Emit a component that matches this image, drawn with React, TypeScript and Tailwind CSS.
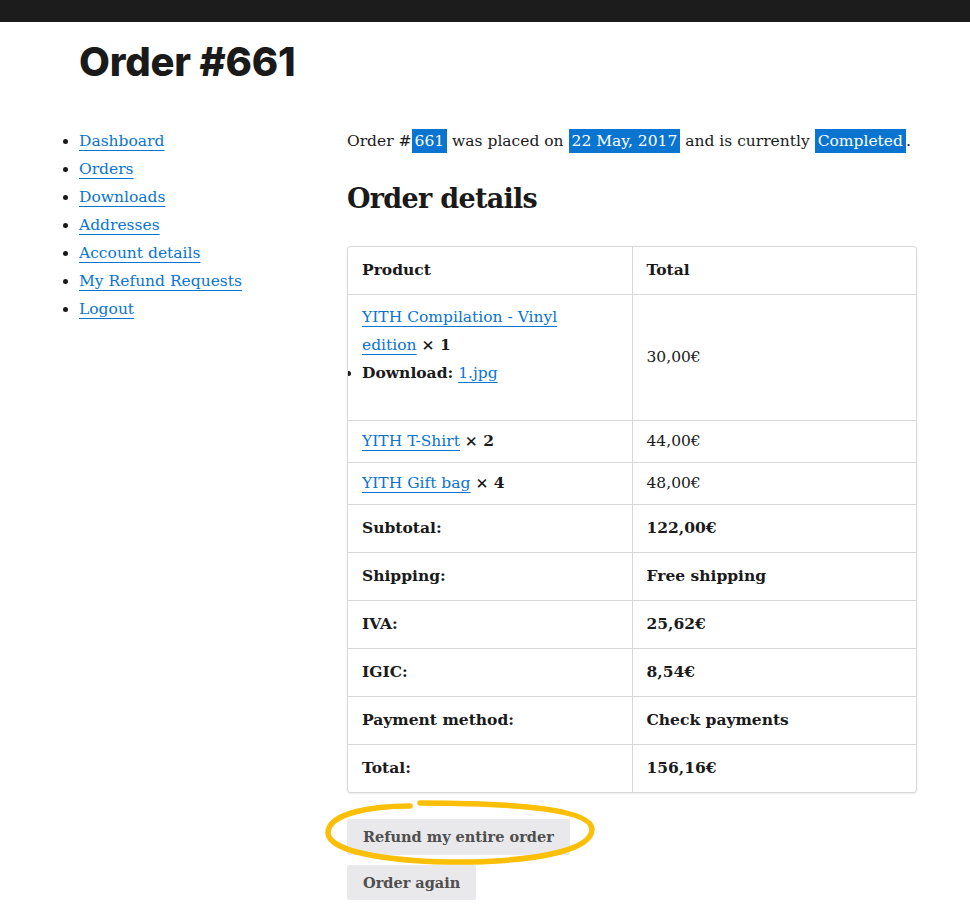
const serif = "font-['DejaVu_Serif','Liberation_Serif',serif]";

const navItems = [
  "Dashboard",
  "Orders",
  "Downloads",
  "Addresses",
  "Account details",
  "My Refund Requests",
  "Logout",
];

const linkCls =
  "text-[#0a74d1] underline decoration-1 underline-offset-[4px] [text-decoration-skip-ink:none]";

const totals = [
  { label: "Subtotal:", value: "122,00€" },
  { label: "Shipping:", value: "Free shipping" },
  { label: "IVA:", value: "25,62€" },
  { label: "IGIC:", value: "8,54€" },
  { label: "Payment method:", value: "Check payments" },
  { label: "Total:", value: "156,16€" },
];

function Mark({ children }: { children: React.ReactNode }) {
  return <mark className="bg-[#0a74d1] text-white px-[3px] py-[3px]">{children}</mark>;
}

export default function App() {
  return (
    <div className={`min-h-screen bg-white text-[#1a1a1a] ${serif} text-[15.5px] leading-[28px]`}>
      <div className="h-[22px] bg-[#1c1c1c]" />

      <div className="pl-[79px]">
        <h1 className="mt-[18px] font-['Inter','Noto_Sans',sans-serif] font-extrabold text-[40px] leading-[44px] tracking-[-0.2px] text-[#1a1a1a]">
          Order #661
        </h1>

        <div className="flex mt-[43px]">
          {/* account nav */}
          <nav className="w-[268px] shrink-0">
            <ul className="list-disc pl-0">
              {navItems.map((item) => (
                <li key={item}>
                  <a href="#" className={linkCls}>
                    {item}
                  </a>
                </li>
              ))}
            </ul>
          </nav>

          {/* order content */}
          <main className="w-[570px]">
            <p>
              Order #<Mark>661</Mark> was placed on <Mark>22 May, 2017</Mark> and is currently{" "}
              <Mark>Completed</Mark>.
            </p>

            <h2 className="mt-[26px] text-[27px] leading-[36px] font-bold tracking-[-0.7px]">Order details</h2>

            <div className="mt-[29px] border border-[#d8d8d8] rounded-[3px] shadow-[0_1px_2px_rgba(0,0,0,0.08)] overflow-hidden">
              <table className="w-full border-collapse">
                <thead>
                  <tr className="h-[47px]">
                    <th className="w-[284px] border-r border-b border-[#d8d8d8] px-[14px] text-left font-bold">Product</th>
                    <th className="border-b border-[#d8d8d8] px-[14px] text-left font-bold">Total</th>
                  </tr>
                </thead>
                <tbody>
                  <tr className="h-[126px]">
                    <td className="border-r border-b border-[#d8d8d8] pl-[14px] pr-[40px] pt-[8px] align-top">
                      <a href="#" className={linkCls}>
                        YITH Compilation - Vinyl edition
                      </a>{" "}
                      <strong>× 1</strong>
                      <ul className="list-disc pl-0">
                        <li>
                          <strong>Download:</strong>{" "}
                          <a href="#" className={linkCls}>
                            1.jpg
                          </a>
                        </li>
                      </ul>
                    </td>
                    <td className="border-b border-[#d8d8d8] px-[14px] align-middle">30,00€</td>
                  </tr>
                  <tr className="h-[42px]">
                    <td className="border-r border-b border-[#d8d8d8] px-[14px]">
                      <a href="#" className={linkCls}>
                        YITH T-Shirt
                      </a>{" "}
                      <strong>× 2</strong>
                    </td>
                    <td className="border-b border-[#d8d8d8] px-[14px]">44,00€</td>
                  </tr>
                  <tr className="h-[42px]">
                    <td className="border-r border-b border-[#d8d8d8] px-[14px]">
                      <a href="#" className={linkCls}>
                        YITH Gift bag
                      </a>{" "}
                      <strong>× 4</strong>
                    </td>
                    <td className="border-b border-[#d8d8d8] px-[14px]">48,00€</td>
                  </tr>
                </tbody>
                <tfoot>
                  {totals.map((t, i) => (
                    <tr key={t.label} className="h-[48px]">
                      <th
                        className={`border-r border-[#d8d8d8] px-[14px] text-left font-bold ${
                          i < totals.length - 1 ? "border-b" : ""
                        }`}
                      >
                        {t.label}
                      </th>
                      <td
                        className={`border-[#d8d8d8] px-[14px] font-bold ${
                          i < totals.length - 1 ? "border-b" : ""
                        }`}
                      >
                        {t.value}
                      </td>
                    </tr>
                  ))}
                </tfoot>
              </table>
            </div>

            {/* actions */}
            <div className="mt-[26px] flex flex-col items-start gap-[10px] pb-[25px] text-[14.5px]">
              <div className="relative">
                <a
                  href="#"
                  className="block bg-[#e9e8ea] rounded-[2px] px-[16px] h-[36px] leading-[36px] font-bold text-[#4f4f4f]"
                >
                  Refund my entire order
                </a>
                <svg
                  className="absolute left-[-25px] top-[-22px] pointer-events-none"
                  width="280"
                  height="72"
                  viewBox="0 0 280 72"
                  fill="none"
                >
                  <path
                    d="M 88 9 C 50 9, 6 16, 6 36 C 7 57, 80 66, 150 65 C 222 63, 270 52, 270 32 C 269 13, 200 6, 98 6"
                    stroke="#fbbf08"
                    strokeWidth="5.5"
                    strokeLinecap="round"
                  />
                </svg>
              </div>
              <a
                href="#"
                className="block bg-[#e9e8ea] rounded-[2px] px-[16px] h-[35px] leading-[35px] font-bold text-[#4f4f4f]"
              >
                Order again
              </a>
            </div>
          </main>
        </div>
      </div>
    </div>
  );
}
